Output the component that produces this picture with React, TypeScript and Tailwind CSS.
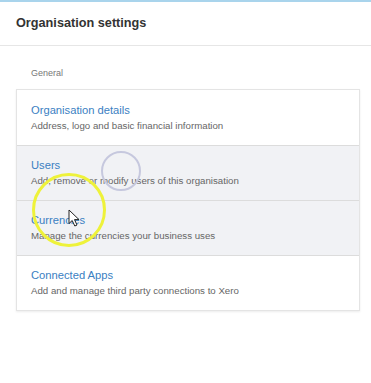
const rows = [
  { title: 'Organisation details', desc: 'Address, logo and basic financial information', shaded: false },
  { title: 'Users', desc: 'Add, remove or modify users of this organisation', shaded: true },
  { title: 'Currencies', desc: 'Manage the currencies your business uses', shaded: true },
  { title: 'Connected Apps', desc: 'Add and manage third party connections to Xero', shaded: false },
]

export default function App() {
  return (
    <div className="relative h-[383px] w-[371px] overflow-hidden bg-white font-['Liberation_Sans',Arial,sans-serif]">
      <div className="h-[2px] bg-[#a9d4ec]" />
      <div className="flex h-[44px] items-center border-b border-[#e6e6e6] px-4">
        <h1 className="text-[12.7px] font-bold text-[#333]">Organisation settings</h1>
      </div>
      <div className="px-4 pt-[21px]">
        <p className="pl-[15px] text-[9px] text-[#777]">General</p>
        <div className="mt-[8px] w-[344px] border border-[#e4e4e4] shadow-[0_1px_2px_rgba(0,0,0,0.08)]">
          {rows.map((row, i) => (
            <div
              key={row.title}
              className={`flex h-[55px] flex-col justify-center px-[14px] ${i > 0 ? 'border-t border-[#dcdcdc]' : ''} ${row.shaded ? 'bg-[#f1f2f5]' : 'bg-white'}`}
            >
              <p className="text-[11.2px] leading-[14px] text-[#3a80c2]">{row.title}</p>
              <p className="mt-[3px] text-[9.7px] leading-[12px] text-[#666]">{row.desc}</p>
            </div>
          ))}
        </div>
      </div>

      {/* loading ring over Users row */}
      <div className="absolute left-[101px] top-[151px] h-[40px] w-[40px] rounded-full border-[2px] border-[#c6c8de]" />
      {/* cursor highlight */}
      <div className="absolute left-[32px] top-[173px] h-[74px] w-[74px] rounded-full border-[3px] border-[#eef23a]" />
      <svg className="absolute left-[68px] top-[209px]" width="13" height="18" viewBox="0 0 13 18">
        <path d="M1 1 L1 14.5 L4.2 11.5 L6.8 17 L9 16 L6.5 10.6 L11 10.6 Z" fill="#fff" stroke="#222" strokeWidth="1" strokeLinejoin="round" />
      </svg>
    </div>
  )
}
